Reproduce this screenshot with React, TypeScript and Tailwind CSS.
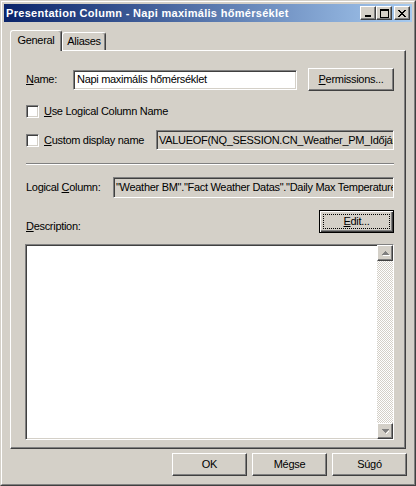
import React from 'react';

const raised =
  'border border-t-white border-l-white border-r-[#404040] border-b-[#404040] shadow-[inset_-1px_-1px_#808080]';
const sunkenWhite =
  'border border-t-[#808080] border-l-[#808080] border-r-white border-b-white shadow-[inset_1px_1px_#404040,inset_-1px_-1px_#d4d0c8] bg-white';
const sunkenGray =
  'border border-t-[#808080] border-l-[#808080] border-r-white border-b-white shadow-[inset_1px_1px_#404040] bg-[#d4d0c8]';

function Button({ children, w = 'w-[75px]' }: { children: React.ReactNode; w?: string }) {
  return (
    <div className={`${raised} ${w} h-[23px] flex items-center justify-center bg-[#d4d0c8]`}>
      {children}
    </div>
  );
}

function Checkbox() {
  return <div className={`${sunkenWhite} w-[13px] h-[13px] shrink-0`} />;
}

function CaptionButton({ children }: { children: React.ReactNode }) {
  return (
    <div className={`${raised} w-[16px] h-[14px] bg-[#d4d0c8] flex items-center justify-center`}>
      {children}
    </div>
  );
}

function Arrow({ up }: { up?: boolean }) {
  return (
    <svg width="9" height="6" viewBox="0 0 9 6" shapeRendering="crispEdges">
      {up ? (
        <>
          <path d="M2 5h7M3 4h1M4 3h1M5 2h1" stroke="#fff" />
          <path d="M1 4h7M2 3h5M3 2h3M4 1h1" stroke="#808080" />
        </>
      ) : (
        <>
          <path d="M5 5h1M6 4h1M7 3h1" stroke="#fff" />
          <path d="M1 1h7M2 2h5M3 3h3M4 4h1" stroke="#808080" />
        </>
      )}
    </svg>
  );
}

function ScrollButton({ up }: { up?: boolean }) {
  return (
    <div className={`${raised} w-[16px] h-[16px] bg-[#d4d0c8] flex items-center justify-center`}>
      <Arrow up={up} />
    </div>
  );
}

export default function App() {
  return (
    <div className="w-[416px] h-[486px] bg-[#d4d0c8] border border-t-[#d4d0c8] border-l-[#d4d0c8] border-r-[#404040] border-b-[#404040] font-['Liberation_Sans',Arial,sans-serif] text-[11px] tracking-[-0.3px] text-black leading-none select-none">
      <div className="h-full border border-t-white border-l-white border-r-[#808080] border-b-[#808080] p-[2px] flex flex-col">
        {/* Title bar */}
        <div className="h-[18px] shrink-0 flex items-center bg-[linear-gradient(to_right,#0a246a,#a6caf0)] pl-[2px] pr-[2px]">
          <span className="text-white font-bold text-[11px] tracking-[0.3px] flex-1 truncate">
            Presentation Column - Napi maximális hőmérséklet
          </span>
          <div className="flex items-center">
            <CaptionButton>
              <svg width="8" height="8" viewBox="0 0 8 8" shapeRendering="crispEdges">
                <rect x="1" y="6" width="6" height="2" fill="#000" />
              </svg>
            </CaptionButton>
            <CaptionButton>
              <svg width="9" height="9" viewBox="0 0 9 9" shapeRendering="crispEdges">
                <rect x="0.5" y="0.5" width="8" height="8" fill="none" stroke="#000" />
                <rect x="0" y="1" width="9" height="1" fill="#000" />
              </svg>
            </CaptionButton>
            <div className="w-[2px]" />
            <CaptionButton>
              <svg width="8" height="7" viewBox="0 0 8 7" shapeRendering="crispEdges">
                <path d="M0 0h2l2 2.5L6 0h2L5 3.5 8 7H6L4 4.5 2 7H0l3-3.5z" fill="#000" />
              </svg>
            </CaptionButton>
          </div>
        </div>

        {/* Body */}
        <div className="flex-1 flex flex-col pt-[8px] px-[6px] pb-[6px]">
          {/* Tabs */}
          <div className="h-[20px] shrink-0 flex items-end">
            <div className="relative z-10 -mb-px h-[21px] w-[52px] bg-[#d4d0c8] border-t border-l border-r border-t-white border-l-white border-r-[#404040] shadow-[inset_-1px_0_#808080] rounded-t-[3px] flex items-center justify-center pb-[1px]">
              General
            </div>
            <div className="h-[18px] w-[44px] bg-[#d4d0c8] border-t border-l border-r border-t-white border-l-white border-r-[#404040] shadow-[inset_-1px_0_#808080] rounded-t-[3px] flex items-center justify-center">
              Aliases
            </div>
          </div>

          {/* Panel */}
          <div className="h-[399px] shrink-0 border border-t-white border-l-white border-r-[#404040] border-b-[#404040] shadow-[inset_-1px_-1px_#808080] pl-[15px] pr-[11px] pt-[17px] flex flex-col">
            <div className="h-[23px] flex items-center">
              <span className="w-[47px]">
                <u>N</u>ame:
              </span>
              <div className={`${sunkenWhite} w-[224px] h-[20px] flex items-center pl-[3px] overflow-hidden whitespace-nowrap`}>
                Napi maximális hőmérséklet
              </div>
              <div className="ml-auto">
                <Button w="w-[86px]">
                  <span>
                    <u>P</u>ermissions...
                  </span>
                </Button>
              </div>
            </div>

            <div className="h-[13px] mt-[14px] flex items-center gap-[5px]">
              <Checkbox />
              <span>
                <u>U</u>se Logical Column Name
              </span>
            </div>

            <div className="h-[20px] mt-[12px] flex items-center gap-[5px]">
              <Checkbox />
              <span>
                <u>C</u>ustom display name
              </span>
              <div className={`${sunkenGray} ml-auto w-[238px] h-[20px] flex items-center pl-[2px] overflow-hidden whitespace-nowrap`}>
                VALUEOF(NQ_SESSION.CN_Weather_PM_Időjárás)
              </div>
            </div>

            <div className="mt-[13px] h-[2px] border-t border-t-[#808080] border-b border-b-white" />

            <div className="h-[21px] mt-[12px] flex items-center">
              <span className="w-[87px]">
                Logical <u>C</u>olumn:
              </span>
              <div className={`${sunkenGray} flex-1 h-[21px] flex items-center pl-[2px] overflow-hidden whitespace-nowrap`}>
                "Weather BM"."Fact Weather Datas"."Daily Max Temperature"
              </div>
            </div>

            <div className="h-[23px] mt-[12px] flex items-end justify-between">
              <span className="mb-[1px]">
                <u>D</u>escription:
              </span>
              <div className="relative w-[75px] h-[23px] border border-black shadow-[inset_1px_1px_white,inset_-1px_-1px_#404040,inset_-2px_-2px_#808080] bg-[#d4d0c8] flex items-center justify-center">
                <span className="absolute inset-[3px] border border-dotted border-black" />
                <span>
                  <u>E</u>dit...
                </span>
              </div>
            </div>

            <div className={`${sunkenWhite} mt-[11px] -ml-px h-[196px] flex justify-end`}>
              <div className="w-[16px] flex flex-col">
                <ScrollButton up />
                <div className="flex-1 bg-[repeating-conic-gradient(#ffffff_0_25%,#d4d0c8_0_50%)] bg-[length:2px_2px]" />
                <ScrollButton />
              </div>
            </div>
          </div>

          {/* Dialog buttons */}
          <div className="mt-[4px] flex justify-end gap-[5px] -mr-px">
            <Button>OK</Button>
            <Button>Mégse</Button>
            <Button>Súgó</Button>
          </div>
        </div>
      </div>
    </div>
  );
}
